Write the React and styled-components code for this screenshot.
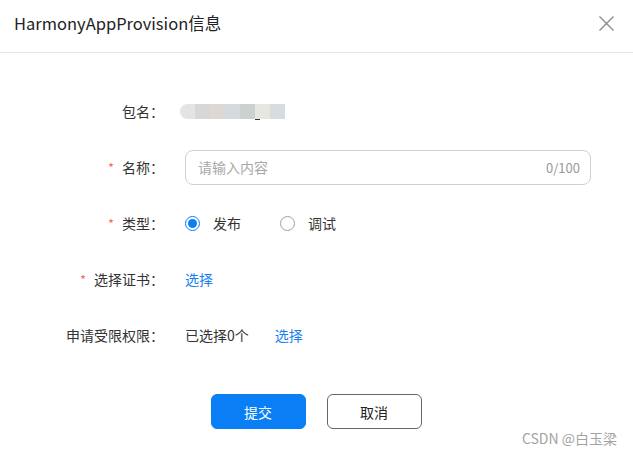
import React, { useState } from "react";
import styled, { createGlobalStyle } from "styled-components";

const GlobalStyle = createGlobalStyle`
  html, body {
    margin: 0;
    padding: 0;
    background: #fff;
  }
  body {
    font-family: "Noto Sans CJK SC", "Noto Sans", sans-serif;
    color: #333;
  }
`;

const Dialog = styled.div`
  position: relative;
  width: 633px;
  height: 455px;
  background: #fff;
  overflow: hidden;
`;

const Header = styled.div`
  height: 53px;
  display: flex;
  align-items: center;
  justify-content: space-between;
  padding: 0 19px 0 14px;
  border-bottom: 1px solid #e6e6e6;
  box-sizing: border-box;
`;

const Title = styled.div`
  font-size: 16.5px;
  color: #222;
  margin-top: -6px;
`;

const Close = styled.button`
  border: none;
  background: none;
  padding: 0;
  width: 15px;
  height: 15px;
  margin-top: -6px;
  cursor: pointer;
  display: flex;
`;

const Body = styled.div`
  padding-top: 40px;
  display: flex;
  flex-direction: column;
  gap: 20px;
`;

const Row = styled.div`
  display: flex;
  align-items: center;
  height: 36px;
`;

const Label = styled.div`
  width: 164px;
  flex: none;
  text-align: right;
  font-size: 14px;
  color: #333;
`;

const Star = styled.span`
  color: #f56c6c;
  margin-right: 8px;
  font-size: 13px;
`;

const Value = styled.div`
  margin-left: 21px;
  flex: 1;
  display: flex;
  align-items: center;
  font-size: 14px;
  color: #333;
`;

const Blur = styled.div`
  display: flex;
  margin-left: -5px;
  height: 15px;
  position: relative;
`;

const Cell = styled.span`
  width: 15px;
  height: 15px;
  background: ${(p) => p.$c};
  &:first-child {
    border-radius: 8px 0 0 8px;
  }
`;

const Tick = styled.span`
  position: absolute;
  left: 75px;
  top: 15px;
  width: 5px;
  height: 1px;
  background: #333;
`;

const InputWrap = styled.div`
  width: 406px;
  height: 35px;
  box-sizing: border-box;
  border: 1px solid #cfcfcf;
  border-radius: 8px;
  display: flex;
  align-items: center;
  padding: 0 10px 0 12px;
`;

const Input = styled.input`
  flex: 1;
  border: none;
  outline: none;
  font: inherit;
  font-size: 14px;
  color: #333;
  padding: 0;
  background: transparent;
  &::placeholder {
    color: #a8a8a8;
  }
`;

const Count = styled.span`
  font-size: 13px;
  color: #999;
`;

const RadioItem = styled.label`
  display: flex;
  align-items: center;
  margin-right: 39px;
  cursor: pointer;
`;

const RadioDot = styled.span`
  width: 15px;
  height: 15px;
  box-sizing: border-box;
  border-radius: 50%;
  border: 1px solid ${(p) => (p.$on ? "#0a7ff5" : "#a0a0a0")};
  display: flex;
  align-items: center;
  justify-content: center;
  margin-right: 13px;
  &::after {
    content: "";
    width: 9px;
    height: 9px;
    border-radius: 50%;
    background: ${(p) => (p.$on ? "#0a7ff5" : "transparent")};
  }
`;

const Link = styled.a`
  color: #1a7ff0;
  font-size: 14px;
  cursor: pointer;
  margin-left: ${(p) => p.$gap || 0}px;
`;

const Footer = styled.div`
  display: flex;
  justify-content: center;
  gap: 21px;
  margin-top: 41px;
  padding-right: 1px;
`;

const Btn = styled.button`
  width: 95px;
  height: 35px;
  border-radius: 6px;
  font: inherit;
  font-size: 14px;
  cursor: pointer;
  box-sizing: border-box;
  border: 1px solid ${(p) => (p.$primary ? "#0a7ff5" : "#666")};
  background: ${(p) => (p.$primary ? "#0a7ff5" : "#fff")};
  color: ${(p) => (p.$primary ? "#fff" : "#222")};
`;

const Watermark = styled.div`
  position: absolute;
  right: 16px;
  bottom: 7px;
  font-size: 14px;
  color: #a3a3a3;
  pointer-events: none;
`;

const blocks = ["#e4e3e5", "#d6d7d9", "#dcd8d6", "#d7dadd", "#ccd0d1", "#e8e6e0", "#d8dcdf"];

export default function App() {
  const [type, setType] = useState("release");
  const [name, setName] = useState("");

  return (
    <Dialog>
      <GlobalStyle />
      <Header>
        <Title>HarmonyAppProvision信息</Title>
        <Close aria-label="关闭">
          <svg width="15" height="15" viewBox="0 0 15 15">
            <path d="M0.5 0.5L14.5 14.5M14.5 0.5L0.5 14.5" stroke="#8a8a8a" strokeWidth="1.4" fill="none" />
          </svg>
        </Close>
      </Header>
      <Body>
        <Row>
          <Label>包名：</Label>
          <Value>
            <Blur>
              {blocks.map((c, i) => (
                <Cell key={i} $c={c} />
              ))}
              <Tick />
            </Blur>
          </Value>
        </Row>
        <Row>
          <Label>
            <Star>*</Star>名称：
          </Label>
          <Value>
            <InputWrap>
              <Input
                placeholder="请输入内容"
                value={name}
                maxLength={100}
                onChange={(e) => setName(e.target.value)}
              />
              <Count>{name.length}/100</Count>
            </InputWrap>
          </Value>
        </Row>
        <Row>
          <Label>
            <Star>*</Star>类型：
          </Label>
          <Value>
            <RadioItem onClick={() => setType("release")}>
              <RadioDot $on={type === "release"} />
              发布
            </RadioItem>
            <RadioItem onClick={() => setType("debug")}>
              <RadioDot $on={type === "debug"} />
              调试
            </RadioItem>
          </Value>
        </Row>
        <Row>
          <Label>
            <Star>*</Star>选择证书：
          </Label>
          <Value>
            <Link>选择</Link>
          </Value>
        </Row>
        <Row>
          <Label>申请受限权限：</Label>
          <Value>
            已选择0个
            <Link $gap={26}>选择</Link>
          </Value>
        </Row>
      </Body>
      <Footer>
        <Btn $primary>提交</Btn>
        <Btn>取消</Btn>
      </Footer>
      <Watermark>CSDN @白玉梁</Watermark>
    </Dialog>
  );
}
